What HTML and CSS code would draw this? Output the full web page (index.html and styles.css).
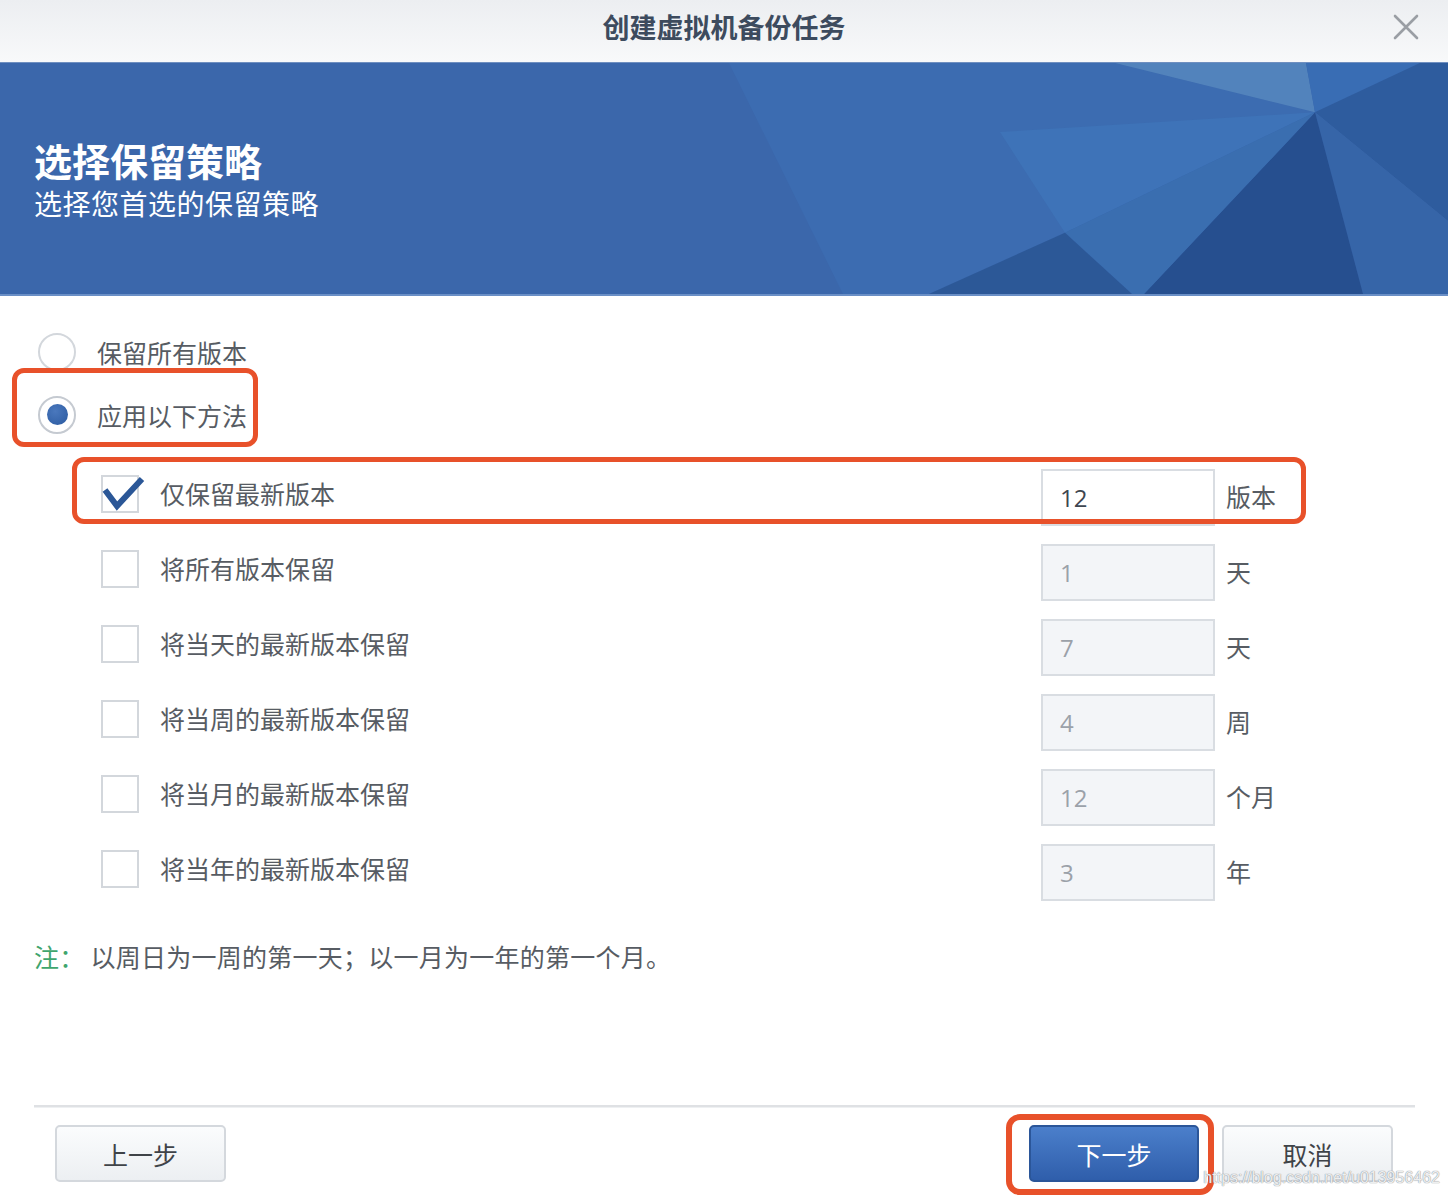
FILE: index.html
```html
<!DOCTYPE html>
<html lang="zh-CN">
<head>
<meta charset="utf-8">
<title>创建虚拟机备份任务</title>
<link rel="stylesheet" href="styles.css">
</head>
<body>
<header class="titlebar">
  <h1 class="titlebar-text">创建虚拟机备份任务</h1>
  <span class="close" aria-label="关闭">
    <svg width="26" height="26" viewBox="0 0 26 26"><path d="M2 2 L24 24 M24 2 L2 24" stroke="#9a9ea4" stroke-width="2.6" stroke-linecap="round" fill="none"/></svg>
  </span>
</header>

<section class="banner">
  <svg class="banner-bg" viewBox="0 0 1448 234" preserveAspectRatio="none">
    <rect x="0" y="0" width="1448" height="234" fill="#3b67ab"/>
    <polygon points="729,0 1115,0 1315,50 1065,172 929,234 843,234" fill="#3c6cb1"/>
    <polygon points="1000,70 1315,50 1065,172" fill="#3f78bd" opacity="0.6"/>
    <polygon points="1115,0 1306,0 1315,50" fill="#5283bc"/>
    <polygon points="1306,0 1420,0 1315,50" fill="#396db4"/>
    <polygon points="1420,0 1448,0 1448,160 1315,50" fill="#2e5c9e"/>
    <polygon points="1315,50 1448,160 1448,234 1363,234" fill="#3665a8"/>
    <polygon points="1315,50 1363,234 1144,234" fill="#264f8f"/>
    <polygon points="1065,172 1315,50 1144,234 1132,234" fill="#3a6eb0"/>
    <polygon points="1065,172 1132,234 929,234" fill="#2c5897"/>
  </svg>
  <div class="banner-text">
    <h2 class="banner-title">选择保留策略</h2>
    <p class="banner-sub">选择您首选的保留策略</p>
  </div>
</section>

<main class="content">
  <div class="radio-row">
    <span class="radio"></span>
    <span class="label">保留所有版本</span>
  </div>
  <div class="radio-row">
    <span class="radio checked"></span>
    <span class="label">应用以下方法</span>
    <span class="mark mark-radio"></span>
  </div>

  <div class="options">
    <div class="opt-row">
      <span class="checkbox">
        <svg class="tick" width="46" height="40" viewBox="0 0 46 40"><path d="M4 15 L16 31 L41 4" stroke="#2b5797" stroke-width="6" fill="none" stroke-linejoin="miter"/></svg>
      </span>
      <span class="label opt-label">仅保留最新版本</span>
      <span class="num">12</span>
      <span class="unit">版本</span>
      <span class="mark mark-row"></span>
    </div>
    <div class="opt-row">
      <span class="checkbox"></span>
      <span class="label opt-label">将所有版本保留</span>
      <span class="num disabled">1</span>
      <span class="unit">天</span>
    </div>
    <div class="opt-row">
      <span class="checkbox"></span>
      <span class="label opt-label">将当天的最新版本保留</span>
      <span class="num disabled">7</span>
      <span class="unit">天</span>
    </div>
    <div class="opt-row">
      <span class="checkbox"></span>
      <span class="label opt-label">将当周的最新版本保留</span>
      <span class="num disabled">4</span>
      <span class="unit">周</span>
    </div>
    <div class="opt-row">
      <span class="checkbox"></span>
      <span class="label opt-label">将当月的最新版本保留</span>
      <span class="num disabled">12</span>
      <span class="unit">个月</span>
    </div>
    <div class="opt-row">
      <span class="checkbox"></span>
      <span class="label opt-label">将当年的最新版本保留</span>
      <span class="num disabled">3</span>
      <span class="unit">年</span>
    </div>
  </div>

  <p class="note"><span class="note-key">注：</span>以周日为一周的第一天；以一月为一年的第一个月。</p>
</main>

<footer class="footer">
  <div class="sep"></div>
  <div class="btns">
    <button class="btn">上一步</button>
    <span class="spacer"></span>
    <button class="btn primary">下一步<span class="mark mark-btn"></span></button>
    <button class="btn">取消</button>
  </div>
  <span class="watermark">https://blog.csdn.net/u013956462</span>
</footer>
</body>
</html>
```

FILE: styles.css
```css
* { box-sizing: border-box; }

html, body {
  margin: 0;
  padding: 0;
}

body {
  width: 1448px;
  height: 1196px;
  overflow: hidden;
  background: #ffffff;
  font-family: "Noto Sans CJK SC", "Noto Sans", sans-serif;
  color: #555a60;
  display: flex;
  flex-direction: column;
}

/* Title bar */
.titlebar {
  height: 62px;
  flex: none;
  position: relative;
  display: flex;
  align-items: center;
  justify-content: center;
  background: linear-gradient(#eceef1, #f8f9fa);
}

.titlebar-text {
  margin: 0;
  font-size: 27px;
  font-weight: 700;
  color: #3d4b5e;
  line-height: 1;
  padding-bottom: 10px;
}

.close {
  position: absolute;
  right: 29px;
  top: 14px;
  display: block;
  width: 26px;
  height: 26px;
}

.close svg { display: block; }

/* Banner */
.banner {
  height: 234px;
  flex: none;
  position: relative;
  overflow: hidden;
  border-top: 1px solid #6f8fc0;
  border-bottom: 2px solid #6a8fc6;
}

.banner-bg {
  position: absolute;
  left: 0;
  top: 0;
  width: 100%;
  height: 100%;
  display: block;
}

.banner-text {
  position: relative;
  padding: 76px 0 0 34px;
  color: #ffffff;
}

.banner-title {
  margin: 0;
  font-size: 38px;
  font-weight: 700;
  line-height: 42px;
}

.banner-sub {
  margin: 5px 0 0 0;
  font-size: 28px;
  font-weight: 400;
  line-height: 34px;
  letter-spacing: 0.5px;
}

/* Content */
.content {
  flex: 1;
  padding: 24px 0 0 34px;
}

.radio-row {
  position: relative;
  height: 63px;
  display: flex;
  align-items: center;
  gap: 21px;
  margin-left: 4px;
  width: fit-content;
}

.label {
  font-size: 25px;
  line-height: 34px;
  color: #575c63;
}

.radio-row .label {
  margin-top: 0;
}

.radio {
  width: 38px;
  height: 38px;
  border-radius: 50%;
  border: 2px solid #d3d7dc;
  background: #ffffff;
  display: flex;
  align-items: center;
  justify-content: center;
}

.radio.checked {
  border-color: #c5cad1;
}

.radio.checked::after {
  content: "";
  width: 21px;
  height: 21px;
  border-radius: 50%;
  background: radial-gradient(circle at 40% 35%, #4a78bd, #2b5aa0);
}

.mark {
  position: absolute;
  border: 5px solid #e8512a;
  border-radius: 12px;
  pointer-events: none;
}

.mark-radio {
  left: -26px;
  top: -15px;
  width: 246px;
  height: 79px;
}

.options {
  margin: 14px 0 0 67px;
  width: 1205px;
}

.opt-row {
  position: relative;
  height: 75px;
  display: flex;
  align-items: center;
}

.checkbox {
  position: relative;
  flex: none;
  width: 38px;
  height: 38px;
  border: 2px solid #d3d7dc;
  background: #ffffff;
  margin-top: -8px;
}

.tick {
  position: absolute;
  left: -2px;
  top: -2px;
  overflow: visible;
}

.opt-label {
  flex: 1;
  margin-left: 21px;
  margin-top: -9px;
}

.num {
  flex: none;
  width: 174px;
  height: 57px;
  border: 2px solid #d9dde2;
  background: #ffffff;
  padding-left: 17px;
  display: flex;
  align-items: center;
  font-family: "Open Sans", "Noto Sans", sans-serif;
  font-size: 24px;
  color: #3e4650;
}

.num.disabled {
  background: #f3f5f8;
  color: #9ba1a9;
}

.unit {
  flex: none;
  width: 80px;
  margin-left: 11px;
  margin-top: -4px;
  font-size: 25px;
  color: #575c63;
}

.mark-row {
  left: -29px;
  top: -3px;
  width: 1234px;
  height: 67px;
}

.note {
  margin: 29px 0 0 0;
  font-size: 25px;
  line-height: 34px;
  color: #575c63;
  letter-spacing: 0.25px;
}

.note-key {
  color: #3fa56d;
  margin-right: 6px;
}

/* Footer */
.footer {
  position: relative;
  flex: none;
  padding: 0 33px 14px 34px;
}

.sep {
  height: 3px;
  border-top: 2px solid #dfe1e4;
  border-bottom: 1px solid #eef0f2;
}

.btns {
  display: flex;
  align-items: center;
  gap: 23px;
  margin-top: 17px;
  padding: 0 22px 0 21px;
}

.spacer { flex: 1; }

.btn {
  position: relative;
  width: 171px;
  height: 57px;
  border: 2px solid #d4d8dd;
  border-radius: 5px;
  background: linear-gradient(#fbfcfd, #eceff2);
  font-family: "Noto Sans CJK SC", "Noto Sans", sans-serif;
  font-size: 25px;
  color: #3f4348;
  padding: 0;
}

.btn.primary {
  width: 170px;
  border-color: #2b5699;
  background: linear-gradient(#4b7fcb, #2f5eab);
  color: #ffffff;
}

.mark-btn {
  left: -25px;
  top: -13px;
  width: 208px;
  height: 81px;
  border-width: 6px;
  border-radius: 14px;
}

.watermark {
  position: absolute;
  right: 8px;
  bottom: 9px;
  font-family: "Liberation Sans", Arial, sans-serif;
  font-size: 16px;
  color: rgba(255, 255, 255, 0.85);
  text-shadow: 0 0 1px #8e949b, 0 0 1px #8e949b;
  pointer-events: none;
}
```
